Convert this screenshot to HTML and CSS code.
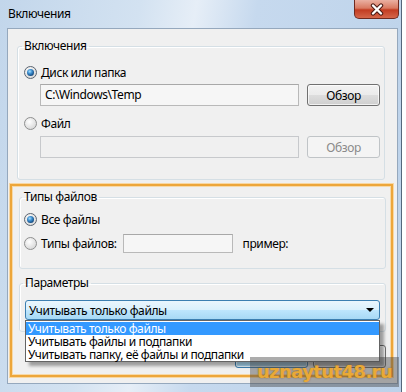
FILE: index.html
```html
<!DOCTYPE html>
<html lang="ru">

<head>
    <meta charset="UTF-8">
    <title>Включения</title>
    <link rel="stylesheet" href="styles.css">
</head>

<body>
    <div class="window">
        <!-- заголовок окна -->
        <div class="titlebar">
            <span class="title">Включения</span>
            <div class="close">
                <svg width="18" height="13" viewBox="0 0 18 13">
                    <path d="M5 2.5 L13 10.5 M13 2.5 L5 10.5" stroke="#4a1a14" stroke-width="4.4" stroke-linecap="round" fill="none" />
                    <path d="M5 2.5 L13 10.5 M13 2.5 L5 10.5" stroke="#ffffff" stroke-width="2.4" stroke-linecap="round" fill="none" />
                </svg>
            </div>
        </div>

        <div class="client">
            <!-- Включения -->
            <fieldset class="group group-incl">
                <legend>Включения</legend>
                <div class="row">
                    <span class="radio checked"></span>
                    <span>Диск или папка</span>
                </div>
                <div class="row row-field">
                    <div class="field">C:\Windows\Temp</div>
                    <button class="btn">Обзор</button>
                </div>
                <div class="row row-gap">
                    <span class="radio"></span>
                    <span>Файл</span>
                </div>
                <div class="row row-field2">
                    <div class="field disabled"></div>
                    <button class="btn" disabled>Обзор</button>
                </div>
            </fieldset>

            <div class="highlight">
                <!-- Типы файлов -->
                <fieldset class="group group-types">
                    <legend>Типы файлов</legend>
                    <div class="row">
                        <span class="radio checked"></span>
                        <span>Все файлы</span>
                    </div>
                    <div class="row row-types">
                        <span class="radio"></span>
                        <span>Типы файлов:</span>
                        <div class="field small"></div>
                        <span class="example">пример:</span>
                    </div>
                </fieldset>

                <!-- Параметры -->
                <fieldset class="group group-params">
                    <legend>Параметры</legend>
                    <div class="combo">
                        <span>Учитывать только файлы</span>
                        <span class="arrow"></span>
                        <ul class="dropdown">
                            <li class="selected">Учитывать только файлы</li>
                            <li>Учитывать файлы и подпапки</li>
                            <li>Учитывать папку, её файлы и подпапки</li>
                        </ul>
                    </div>
                </fieldset>

                <div class="actions">
                    <button class="btn btn-default">OK</button>
                    <button class="btn">Отмена</button>
                </div>
            </div>
        </div>
    </div>

    <div class="watermark">uznaytut48.ru</div>
</body>

</html>
```

FILE: styles.css
```css
body {
    margin: 0;
    background: #ffffff;
    font-family: "Noto Sans", "Liberation Sans", sans-serif;
    font-size: 12px;
    letter-spacing: -0.4px;
    color: #000;
}

.window {
    width: 402px;
    height: 392px;
    box-sizing: border-box;
    padding: 0 3px 0 7px;
    border-right: 1px solid #55677c;
    background: linear-gradient(100deg, #c2d6eb 0%, #d3e2f1 30%, #e6eef7 42%, #c6d9ee 55%, #bcd2ea 100%);
    overflow: hidden;
}

.titlebar {
    height: 28px;
    display: flex;
    justify-content: space-between;
    align-items: flex-start;
}

.title {
    margin-top: 6px;
    margin-left: 1px;
    font-size: 12px;
    line-height: 16px;
}

.close {
    width: 45px;
    height: 19px;
    margin-right: -1px;
    box-sizing: border-box;
    border: 1px solid #6f2a20;
    border-top: none;
    border-radius: 0 0 5px 5px;
    background: linear-gradient(#eab0a2 0%, #d97a62 45%, #c23c22 55%, #d5664a 100%);
    display: flex;
    align-items: center;
    justify-content: center;
}

.client {
    width: 391px;
    box-sizing: border-box;
    border: 1px solid #95a8bd;
    background: #f0f0f0;
    padding: 9px 0 6px 0;
}

.group {
    margin: 0;
    min-width: 0;
    border: 1px solid #d5dfe5;
    border-radius: 3px;
    box-shadow: inset 1px 1px 0 #fff;
}

.group legend {
    margin-left: -2px;
    padding: 0 2px;
    line-height: 16px;
    color: #000;
}

.group-incl {
    margin-left: 9px;
    width: 368px;
    box-sizing: border-box;
    padding: 9px 0 21px 6px;
}

.row {
    display: flex;
    align-items: center;
    height: 18px;
}

.row-field {
    margin-top: 3px;
    height: 22px;
    padding-left: 16px;
}

.row-gap {
    margin-top: 8px;
}

.row-field2 {
    margin-top: 4px;
    height: 22px;
    padding-left: 16px;
}

.radio {
    width: 13px;
    height: 13px;
    box-sizing: border-box;
    border: 1px solid #8e8f8f;
    border-radius: 50%;
    background: radial-gradient(circle at 40% 35%, #ffffff 0%, #e6e6e6 50%, #cfcfcf 100%);
    margin-right: 4px;
    display: flex;
    align-items: center;
    justify-content: center;
    flex-shrink: 0;
}

.radio.checked {
    border-color: #5a6470;
}

.radio.checked::after {
    content: "";
    width: 7px;
    height: 7px;
    border-radius: 50%;
    background: radial-gradient(circle at 40% 35%, #a8e0ff 0%, #3d8fd0 35%, #174f86 70%, #0e3360 100%);
}

.field {
    width: 259px;
    height: 22px;
    box-sizing: border-box;
    border: 1px solid #b9b9b9;
    border-top-color: #a8a8a8;
    background: #f6f6f6;
    padding-left: 4px;
    line-height: 20px;
}

.field.disabled {
    border-color: #c7c9cc;
    background: #f0f0f0;
}

.btn {
    width: 73px;
    height: 22px;
    margin-left: 8px;
    box-sizing: border-box;
    border: 1px solid #707070;
    border-radius: 3px;
    background: linear-gradient(#f2f2f2 0%, #ebebeb 50%, #dddddd 51%, #cfcfcf 100%);
    font-family: "Noto Sans", "Liberation Sans", sans-serif;
    font-size: 12px;
    letter-spacing: -0.4px;
    color: #000;
    padding: 0;
    box-shadow: inset 0 0 0 1px rgba(255, 255, 255, 0.7);
}

.btn:disabled {
    border-color: #c0c4c7;
    background: #f4f4f4;
    color: #8a8a8a;
    box-shadow: none;
}

.highlight {
    margin: 4px 0 0 2px;
    width: 383px;
    box-sizing: border-box;
    border: 2px solid #eda63a;
    box-shadow: 0 0 0 1px #f8d7a2, inset 0 0 0 1px #f7d9a8;
    padding: 3px 5px 7px 7px;
}

.group-types {
    padding: 5px 0 15px 4px;
}

.row-types {
    margin-top: 5px;
    height: 20px;
}

.field.small {
    width: 110px;
    height: 19px;
    margin-left: 6px;
    background: #f6f6f6;
}

.example {
    margin-left: 10px;
}

.group-params {
    margin-top: 6px;
    padding: 9px 0 11px 5px;
}

.combo {
    position: relative;
    width: 355px;
    height: 20px;
    box-sizing: border-box;
    border: 1px solid #3c7fb1;
    border-radius: 3px;
    background: linear-gradient(#eaf6fd 0%, #d9f0fc 50%, #bee6fd 51%, #a7d9f5 100%);
    display: flex;
    align-items: center;
    justify-content: space-between;
    padding: 0 4px 0 3px;
}

.arrow {
    width: 0;
    height: 0;
    border-left: 4px solid transparent;
    border-right: 4px solid transparent;
    border-top: 4px solid #000;
    margin-right: 1px;
}

.dropdown {
    position: absolute;
    top: 19px;
    left: -1px;
    width: 355px;
    box-sizing: border-box;
    margin: 0;
    padding: 1px 0 0 0;
    list-style: none;
    background: #fff;
    border: 1px solid #646464;
    box-shadow: 4px 4px 3px rgba(0, 0, 0, 0.35);
}

.dropdown li {
    height: 13px;
    line-height: 13px;
    padding-left: 2px;
}

.dropdown li.selected {
    background: #3399ff;
    color: #fff;
}

.actions {
    margin-top: 13px;
    display: flex;
    justify-content: flex-end;
}

.actions .btn {
    height: 23px;
    margin-left: 5px;
}

.btn-default {
    border-color: #3c7fb1;
    background: linear-gradient(#eaf6fd 0%, #d9f0fc 50%, #bee6fd 51%, #a7d9f5 100%);
}

.watermark {
    position: absolute;
    left: 250px;
    top: 357px;
    width: 149px;
    height: 30px;
    background: rgba(70, 70, 70, 0.45);
    color: #e9a936;
    font-family: "DejaVu Sans", sans-serif;
    font-weight: bold;
    font-size: 18px;
    line-height: 30px;
    text-align: center;
    letter-spacing: -0.6px;
    text-shadow: 0 0 2px rgba(120, 70, 0, 0.6);
}
```
